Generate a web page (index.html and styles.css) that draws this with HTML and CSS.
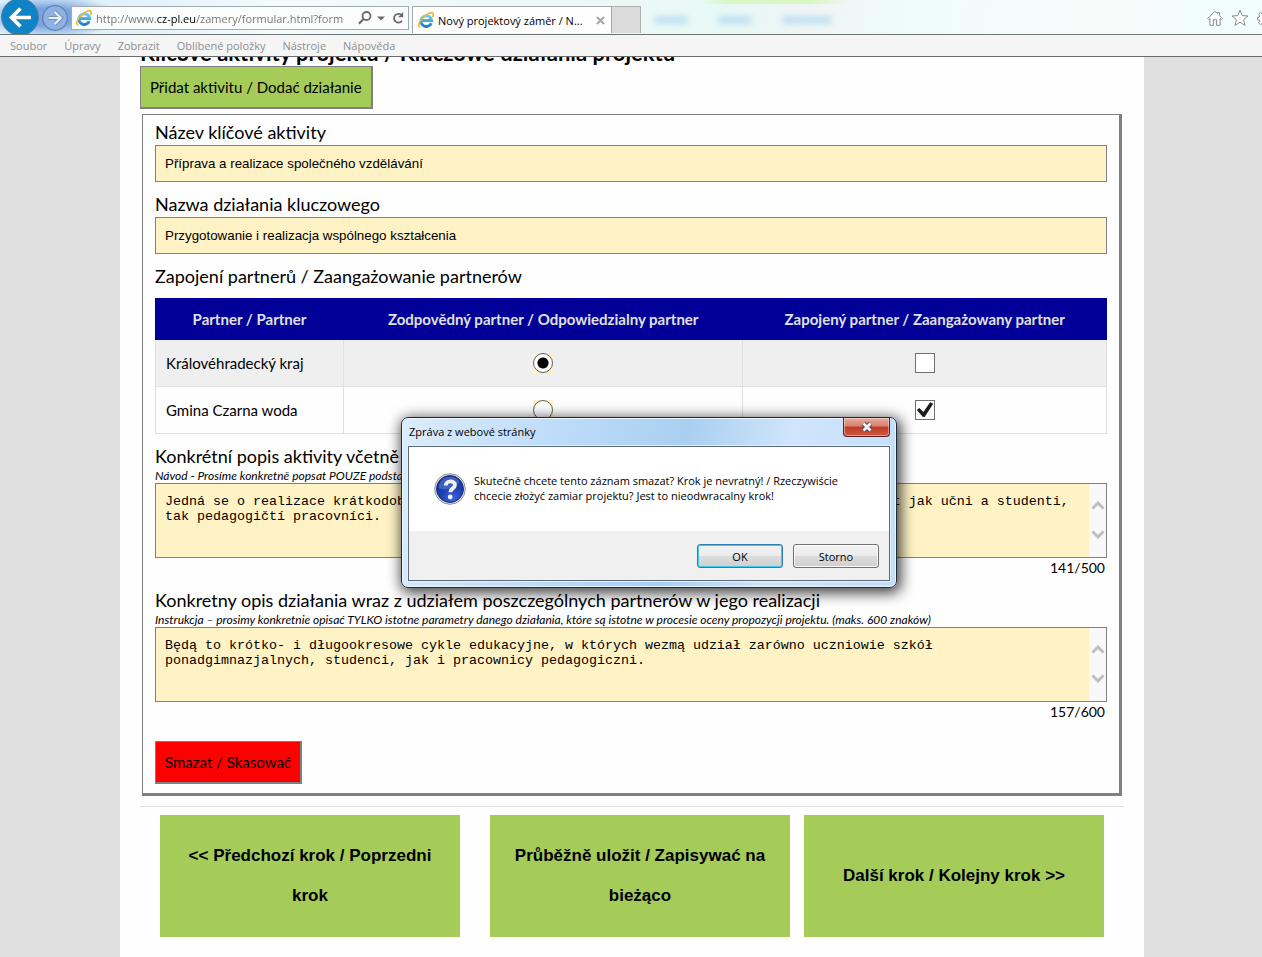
FILE: index.html
```html
<!DOCTYPE html>
<html lang="cs">
<head>
<meta charset="utf-8">
<title>Nový projektový záměr / Nowy zamiar projektu</title>
<link rel="stylesheet" href="styles.css">
</head>
<body>
<svg class="defs" width="0" height="0" aria-hidden="true">
  <defs>
    <linearGradient id="ie-blue" x1="0" y1="0" x2="0" y2="1"><stop offset="0" stop-color="#6fd0f5"/><stop offset="1" stop-color="#1b7fcb"/></linearGradient>
    <radialGradient id="q-blue" cx="0.6" cy="0.85" r="0.9"><stop offset="0" stop-color="#3f62dc"/><stop offset="0.5" stop-color="#1c3fae"/><stop offset="1" stop-color="#14338f"/></radialGradient>
    <symbol id="ie-logo" viewBox="0 0 16 16">
      <path d="M13.300 11.200A5.400 5.400 0 1 1 13.700 8.600H4.200" fill="none" stroke="url(#ie-blue)" stroke-width="3"/>
      <path d="M2.300 15C-1 15 1 9.500 5.500 5S14.600-.2 15.300 1.800c.2 1-.2 2.200-.8 3.300" fill="none" stroke="#f2b824" stroke-width="1.600"/>
    </symbol>
    <symbol id="chev-up" viewBox="0 0 14 10"><path d="M1.500 8.500 7 3l5.500 5.500" fill="none" stroke="#bfbfbf" stroke-width="3"/></symbol>
    <symbol id="chev-down" viewBox="0 0 14 10"><path d="M1.500 1.500 7 7l5.500-5.500" fill="none" stroke="#bfbfbf" stroke-width="3"/></symbol>
  </defs>
</svg>

<header class="browser">
  <div class="toolbar">
    <button class="nav-back" aria-label="Zpět"><svg width="38" height="38" viewBox="0 0 38 38"><circle cx="19" cy="19" r="18.500" fill="#0e83c6" stroke="#5b7f9c"/><path d="M30 19.500H11M19.500 10.500l-9 9 9 9" fill="none" stroke="#fff" stroke-width="3.600"/></svg></button>
    <button class="nav-forward" aria-label="Vpřed"><svg width="26" height="26" viewBox="0 0 26 26"><circle cx="13" cy="13" r="12.300" fill="#8cb2e6" stroke="#6480a8" stroke-width="1.200"/><path d="M6 13h12M12.500 6.500 19 13l-6.500 6.500" fill="none" stroke="#7c92b8" stroke-width="4"/><path d="M6.500 13h12M12.500 6.800 18.700 13l-6.200 6.200" fill="none" stroke="#e6effa" stroke-width="2.200"/></svg></button>
    <div class="address">
      <svg class="logo" width="16" height="16"><use href="#ie-logo"/></svg>
      <input class="url" type="text" aria-label="Adresa" value="http://www.cz-pl.eu/zamery/formular.html?form">
      <button class="tool" aria-label="Hledat"><svg width="14" height="14" viewBox="0 0 14 14"><circle cx="8.500" cy="5" r="4" fill="none" stroke="#6b6b6b" stroke-width="1.800"/><path d="M5.500 8 1 12.700" stroke="#6b6b6b" stroke-width="2.200"/></svg></button>
      <button class="tool" aria-label="Seznam adres"><svg width="8" height="14" viewBox="0 0 8 14"><path d="M0 5.500h8L4 9.500z" fill="#6b6b6b"/></svg></button>
      <button class="tool tool-refresh" aria-label="Aktualizovat"><svg width="12" height="14" viewBox="0 0 12 14"><path d="M10 9.800A4.400 4.400 0 1 1 9.500 4" fill="none" stroke="#6b6b6b" stroke-width="1.800"/><path d="M11.200 1v5.200H6z" fill="#6b6b6b"/></svg></button>
    </div>
    <div class="tab">
      <svg class="logo" width="16" height="16"><use href="#ie-logo"/></svg>
      <span class="tab-title">Nový projektový záměr / N...</span>
      <button class="tool" aria-label="Zavřít kartu"><svg width="9" height="9" viewBox="0 0 9 9"><path d="m1 1 7 7M8 1 1 8" stroke="#a5a5a5" stroke-width="2"/></svg></button>
    </div>
    <button class="new-tab" aria-label="Nová karta"></button>
    <div class="glass"><i></i><i></i><i></i></div>
    <div class="icons">
      <button class="tool" aria-label="Domů"><svg width="16" height="16" viewBox="0 0 16 16"><path d="M.7 8.500 8 1.200l2.500 2.500V2.500h2v3.200l2.800 2.800-1 1-1.200-1v6.800H9.600V9.800H6.400v5.500H2.900V8.500l-1.200 1z" fill="#fff" stroke="#8a8a8a" stroke-linejoin="round"/></svg></button>
      <button class="tool" aria-label="Oblíbené"><svg width="18" height="18" viewBox="0 0 18 18"><path d="m9 1.200 2.200 5.400 5.800.4-4.500 3.700 1.500 5.700-5-3.200-5 3.200 1.500-5.700L1 7l5.800-.4z" fill="#fff" stroke="#8a8a8a" stroke-linejoin="round"/></svg></button>
      <button class="tool" aria-label="Nástroje"><svg width="16" height="16" viewBox="0 0 16 16"><path d="M6.700 1h2.600l.3 2 1.200.5 1.700-1.200 1.800 1.800-1.200 1.700.5 1.200 2 .3v2.400l-2 .3-.5 1.200 1.200 1.700-1.800 1.800-1.700-1.200-1.200.5-.3 2H6.700l-.3-2-1.200-.5-1.700 1.200-1.800-1.800 1.200-1.700L2.400 10l-2-.3V7.300l2-.3.5-1.200-1.200-1.700 1.800-1.800 1.700 1.200L6.400 3z" fill="#fff" stroke="#8a8a8a"/><circle cx="8" cy="8.500" r="2.500" fill="none" stroke="#8a8a8a"/></svg></button>
    </div>
  </div>
  <nav class="menubar">
    <button>Soubor</button><button>Úpravy</button><button>Zobrazit</button><button>Oblíbené položky</button><button>Nástroje</button><button>Nápověda</button>
  </nav>
</header>

<main class="viewport">
  <form class="page">
    <h2 class="title">Klíčové aktivity projektu / Kluczowe działania projektu</h2>
    <button type="button" class="btn btn-add">Přidat aktivitu / Dodać działanie</button>

    <section class="activity">
      <div class="field">
        <label for="name-cs">Název klíčové aktivity</label>
        <input class="text" id="name-cs" type="text" value="Příprava a realizace společného vzdělávání">
      </div>
      <div class="field">
        <label for="name-pl">Nazwa działania kluczowego</label>
        <input class="text" id="name-pl" type="text" value="Przygotowanie i realizacja wspólnego kształcenia">
      </div>
      <div class="field">
        <h3 class="caption">Zapojení partnerů / Zaangażowanie partnerów</h3>
        <table class="partners">
          <thead>
            <tr><th class="c-name">Partner / Partner</th><th class="c-lead">Zodpovědný partner / Odpowiedzialny partner</th><th>Zapojený partner / Zaangażowany partner</th></tr>
          </thead>
          <tbody>
            <tr><td>Královéhradecký kraj</td><td class="mid"><input type="radio" name="lead" aria-label="Zodpovědný: Královéhradecký kraj" checked></td><td class="mid"><input type="checkbox" aria-label="Zapojený: Královéhradecký kraj"></td></tr>
            <tr><td>Gmina Czarna woda</td><td class="mid"><input type="radio" name="lead" aria-label="Zodpovědný: Gmina Czarna woda"></td><td class="mid"><input type="checkbox" aria-label="Zapojený: Gmina Czarna woda" checked></td></tr>
          </tbody>
        </table>
      </div>
      <div class="field">
        <label for="desc-cs">Konkrétní popis aktivity včetně zapojení jednotlivých partnerů</label>
        <p class="note">Návod - Prosíme konkretně popsat POUZE podstatné parametry dané aktivity. (max. 500 znaků)</p>
        <div class="area">
          <textarea id="desc-cs">Jedná se o realizace krátkodobých a dlouhodobých vzdělávacích cyklů, jichž se mohou účastnit jak učni a studenti, tak pedagogičtí pracovníci.</textarea>
          <div class="scroll"><svg width="14" height="10"><use href="#chev-up"/></svg><svg width="14" height="10"><use href="#chev-down"/></svg></div>
        </div>
        <p class="counter">141/500</p>
      </div>
      <div class="field">
        <label for="desc-pl">Konkretny opis działania wraz z udziałem poszczególnych partnerów w jego realizacji</label>
        <p class="note">Instrukcja – prosimy konkretnie opisać TYLKO istotne parametry danego działania, które są istotne w procesie oceny propozycji projektu. (maks. 600 znaków)</p>
        <div class="area">
          <textarea id="desc-pl">Będą to krótko- i długookresowe cykle edukacyjne, w których wezmą udział zarówno uczniowie szkół ponadgimnazjalnych, studenci, jak i pracownicy pedagogiczni.</textarea>
          <div class="scroll"><svg width="14" height="10"><use href="#chev-up"/></svg><svg width="14" height="10"><use href="#chev-down"/></svg></div>
        </div>
        <p class="counter">157/600</p>
      </div>
      <button type="button" class="btn btn-delete">Smazat / Skasować</button>
    </section>

    <div class="steps">
      <button type="button">&lt;&lt; Předchozí krok / Poprzedni krok</button>
      <button type="button">Průběžně uložit / Zapisywać na bieżąco</button>
      <button type="button">Další krok / Kolejny krok &gt;&gt;</button>
    </div>
  </form>
</main>

<div class="dialog" role="dialog" aria-labelledby="dialog-title">
  <div class="dialog-bar">
    <span id="dialog-title">Zpráva z webové stránky</span>
    <button class="dialog-close" aria-label="Zavřít"><svg width="14" height="12" viewBox="0 0 14 12"><path d="m3.500 2.500 7 7M10.500 2.500l-7 7" stroke="#4a4a5c" stroke-width="4.600"/><path d="m3.500 2.500 7 7M10.500 2.500l-7 7" stroke="#f4f4f4" stroke-width="2.800"/></svg></button>
  </div>
  <div class="dialog-frame">
    <div class="dialog-body">
      <svg width="32" height="32" viewBox="0 0 32 32"><circle cx="16" cy="16" r="15.300" fill="#e9e9ee" stroke="#8c8c94"/><circle cx="16" cy="16" r="13.500" fill="url(#q-blue)" stroke="#1a2f7a"/><path d="M4.500 15a11.500 11.500 0 0 1 21-6.500C22 15 12 18 4.500 15z" fill="#6f8fe0" opacity=".45"/><path d="M11.800 12.500c0-5.500 9.200-5.300 9.200-.5 0 3.500-4.700 3.300-4.700 7.200" fill="none" stroke="#f1f1f1" stroke-width="3.800"/><circle cx="16.200" cy="24" r="2.400" fill="#f1f1f1"/></svg>
      <p>Skutečně chcete tento záznam smazat? Krok je nevratný! / Rzeczywiście<br>chcecie złożyć zamiar projektu? Jest to nieodwracalny krok!</p>
    </div>
    <div class="dialog-actions">
      <button class="default">OK</button>
      <button>Storno</button>
    </div>
  </div>
</div>
</body>
</html>
```

FILE: styles.css
```css
*, *::before { box-sizing: border-box; }

body {
  margin: 0;
  height: 100vh;
  display: flex;
  flex-direction: column;
  overflow: hidden;
  background: #e0e0e0;
  color: #000;
  font-family: Lato, "Open Sans", sans-serif;
  font-size: 15px;
}

h2, h3, p { margin: 0; }
button { color: inherit; cursor: pointer; }
.defs { position: absolute; }

/* Browser frame */
.browser {
  flex: none;
  font-family: "Open Sans", "Noto Sans", sans-serif;
  font-size: 11px;
}

.toolbar {
  display: flex;
  align-items: flex-start;
  height: 35px;
  overflow: hidden;
  border-bottom: 1px solid #6e7674;
  background:
    radial-gradient(ellipse 70px 22px at 50px 17px, #7aa3e0 40%, transparent 100%),
    linear-gradient(90deg, transparent 700px, #d9f7c4 730px, #d9f7c4 810px, transparent 850px) 0 0 / 100% 4px no-repeat,
    linear-gradient(100deg, #dff1fb 10%, #f3fbfd 22%, #eef8f6 45%, #e6f8f6 58%, #f0f4f4 64%, #eefcfb 72%, #fafafa 88%, #f2fdfd 94%);
}

.toolbar button {
  display: flex;
  align-items: center;
  justify-content: center;
  padding: 0;
  border: 0;
  background: none;
}

.toolbar .nav-back { flex: none; margin: -2px 0 0 1px; }
.toolbar .nav-forward { flex: none; margin: 5px 0 0 3px; }

.address {
  display: flex;
  align-items: center;
  flex: none;
  width: 338px;
  height: 24px;
  margin: 6px 3px 0 3px;
  padding: 0 4px;
  border: 1px solid #a3aaad;
  background: #fbfdfd;
}

.logo { flex: none; }

/* The domain is drawn darker than the rest of the address */
.url {
  flex: 1;
  min-width: 0;
  height: 22px;
  margin: 0 6px 0 4px;
  padding: 0;
  border: 0;
  outline: 0;
  font: 11px "Open Sans", sans-serif;
  color: transparent;
  background: linear-gradient(90deg, #707070 61px, #000 61px, #000 100px, #707070 100px);
  background-clip: text;
  -webkit-background-clip: text;
}

.address .tool { margin-right: 5px; }
.address .tool-refresh { margin: 0 0 0 2px; }

.tab {
  display: flex;
  align-items: center;
  flex: none;
  width: 200px;
  height: 27px;
  margin-top: 6px;
  padding: 0 6px 0 5px;
  border: 1px solid #a3aaad;
  border-bottom: 0;
  background: #fff;
}

.tab-title { flex: 1; margin-left: 4px; white-space: nowrap; }

.toolbar .new-tab {
  flex: none;
  width: 29px;
  height: 27px;
  margin-top: 6px;
  border: 1px solid #b0b0b0;
  border-left: 0;
  border-bottom: 0;
  background: #dbdbdb;
}

.glass { display: flex; flex: 1; gap: 32px; padding: 17px 0 0 14px; filter: blur(3px); }
.glass i { width: 32px; height: 6px; background: #b4daf0; }
.glass i:last-child { width: 48px; }

.icons { display: flex; align-items: center; gap: 8px; flex: none; margin: 9px -11px 0 0; }

.menubar {
  display: flex;
  gap: 17px;
  height: 22px;
  padding-left: 10px;
  border-bottom: 1px solid #6b6b6b;
  background: #f5f5f5;
}

.menubar button {
  padding: 0;
  border: 0;
  background: none;
  color: #8f8f8f;
  font: 11px "Open Sans", sans-serif;
}

/* Form page */
.viewport { flex: 1; min-height: 0; overflow: hidden; }

.page {
  min-height: 100%;
  margin: 0 118px 0 120px;
  padding: 0 20px 20px;
  background: #fefefe;
}

.title { margin-top: -18px; font-size: 22px; line-height: 27px; white-space: nowrap; }

.btn {
  display: block;
  height: 43px;
  padding: 0 9px;
  border: solid #808080;
  border-width: 1px 2px 2px 1px;
  font: 15px Lato, sans-serif;
}

.btn-add { background: #a5cb59; }
.btn-delete { margin-top: 19px; background: #f00; }

.activity {
  margin: 5px 2px 0;
  padding: 5px 12px 9px;
  border: solid #808080;
  border-width: 1px 3px 3px 1px;
}

.field + .field { margin-top: 10px; }

.field label,
.caption {
  display: block;
  font-size: 18px;
  font-weight: 400;
  line-height: 25px;
}

.caption { margin-bottom: 9px; }

.text {
  display: block;
  width: 100%;
  height: 37px;
  padding: 0 9px;
  border: 1px solid #808080;
  background: #fff3c6;
  font-family: "Liberation Sans", Arial, sans-serif;
}

.partners { width: 100%; border-collapse: collapse; table-layout: fixed; }
.c-name { width: 188px; }
.c-lead { width: 42%; }
.partners th { height: 42px; padding: 0; border: solid #009; border-width: 0 1px; background: #009; color: #e0e0e0; }
.partners td { height: 47px; padding: 0 10px; border: 1px solid #e0e0e0; }
.partners tbody tr:first-child { background: #efefef; }
.partners tbody tr:first-child td { height: 46px; border-top: 0; }
.partners .mid { text-align: center; }

.partners input {
  display: block;
  appearance: none;
  width: 20px;
  height: 20px;
  margin: 0 auto;
  border: 1px solid #707070;
  background: #fff;
}

.partners input[type="radio"] { border: 0; background: #fff3c6; }

.partners input[type="radio"]::before {
  content: "";
  display: block;
  height: 20px;
  border: 1px solid #606060;
  border-radius: 50%;
  background: #fff;
}

.partners input[type="radio"]:checked::before { background: radial-gradient(circle, #000 5px, #fff 6px); }

.partners input[type="checkbox"]:checked::before {
  content: "";
  display: block;
  height: 18px;
  background: #1c1c1c;
  clip-path: polygon(6% 53%, 20% 42%, 43% 64%, 80% 10%, 97% 18%, 50% 92%, 40% 92%);
}

.note { font-size: 12px; font-style: italic; line-height: 14px; white-space: nowrap; }

.area { display: flex; height: 75px; border: 1px solid #808080; background: #fff3c6; }

.area textarea {
  flex: 1;
  padding: 10px 9px;
  border: 0;
  outline: 0;
  resize: none;
  overflow: hidden;
  background: none;
  font-family: "Liberation Mono", monospace;
  line-height: 15px;
}

.scroll {
  display: flex;
  flex-direction: column;
  justify-content: center;
  gap: 20px;
  align-items: center;
  width: 17px;
  background: #f8f8f8;
}

.counter { padding-right: 2px; font-size: 14px; line-height: 20px; text-align: right; }

.steps {
  display: flex;
  gap: 30px;
  margin-top: 10px;
  padding: 8px 20px 0;
  border-top: 1px solid #e0e0e0;
}

.steps button {
  flex: 0 1 300px;
  height: 122px;
  padding: 0 20px;
  border: 0;
  background: #a5cb59;
  font: bold 17px/40px "Liberation Sans", Arial, sans-serif;
}

.steps button:last-child { margin-left: -16px; }

/* Confirmation window */
.dialog {
  position: absolute;
  top: 417px;
  left: 401px;
  width: 496px;
  padding: 0 6px 6px;
  border: 1px solid #1f2a36;
  border-radius: 7px;
  background: linear-gradient(100deg, #dcecfb, #bddcf9 30%, #a9cff0 55%, #cfe5fb 75%, #c3defa);
  box-shadow: inset 0 0 0 1px #e9f5ff, 2px 3px 14px 2px rgba(0, 0, 0, 0.75);
  font-family: "Open Sans", sans-serif;
  font-size: 11px;
}

.dialog-bar { display: flex; justify-content: space-between; height: 28px; line-height: 28px; padding-left: 1px; }

.dialog-close {
  display: flex;
  align-items: center;
  justify-content: center;
  width: 47px;
  height: 19px;
  padding: 0;
  border: 1px solid #5a2222;
  border-top: 0;
  border-radius: 0 0 4px 4px;
  background: linear-gradient(#e9aa9c 0, #d98070 45%, #bf3a24 50%, #cc5a44 100%);
  box-shadow: inset 0 0 0 1px rgba(255, 255, 255, 0.4);
}

.dialog-frame { border: 1px solid #5c6b7a; background: #f0f0f0; box-shadow: 0 0 0 1px #dff0ff; }

.dialog-body {
  display: flex;
  gap: 8px;
  height: 84px;
  padding: 26px 20px 0 25px;
  background: #fff;
}

.dialog-body svg { flex: none; }
.dialog-body p { line-height: 15px; white-space: nowrap; }

.dialog-actions { display: flex; justify-content: flex-end; gap: 10px; padding: 13px 10px 12px; }

.dialog-actions button {
  width: 86px;
  height: 24px;
  padding: 0;
  border: 1px solid #707070;
  border-radius: 3px;
  background: linear-gradient(#f2f2f2 0, #ebebeb 50%, #dddddd 50%, #cfcfcf 100%);
  box-shadow: inset 0 0 0 1px #fbfbfb;
  font: 11px "Open Sans", sans-serif;
}

.dialog-actions .default { border-color: #2c7fb0; box-shadow: inset 0 0 0 1px #43c8f2; }
```
